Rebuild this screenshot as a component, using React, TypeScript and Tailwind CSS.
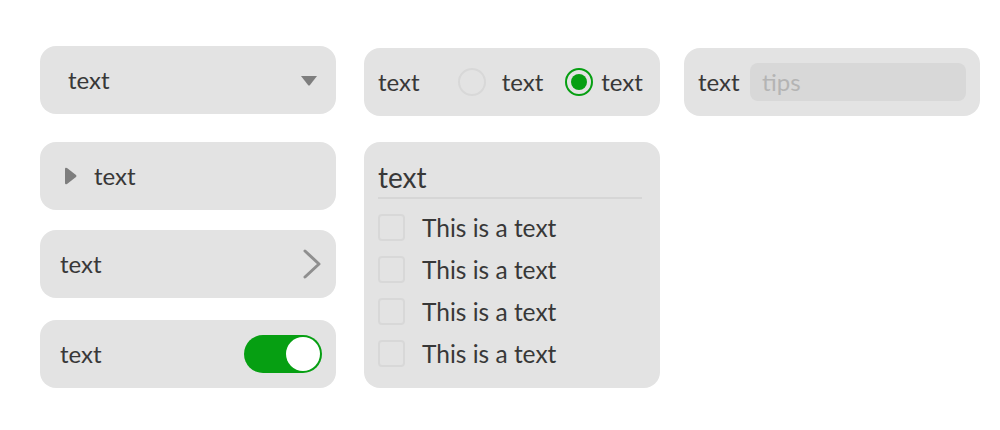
const font = { fontFamily: 'Lato, "Noto Sans", sans-serif' }

function Card({ className = '', children }: { className?: string; children: React.ReactNode }) {
  return (
    <div className={`w-[296px] rounded-2xl bg-[#e3e3e3] text-[#383838] ${className}`}>{children}</div>
  )
}

function Checkbox() {
  return <span className="h-[27px] w-[27px] shrink-0 rounded-[4px] border-2 border-[#d8d8d8]" />
}

export default function App() {
  return (
    <div className="flex h-[430px] w-[1000px] bg-white pl-10" style={font}>
      {/* left column */}
      <div className="flex flex-col pt-[46px]">
        <Card className="flex h-[68px] items-center justify-between pl-7 pr-[18px]">
          <span className="text-[24px]">text</span>
          <svg width="18" height="11" viewBox="0 0 18 11">
            <path d="M1 1 H17 L10 10 Q9 11 8 10 Z" fill="#7e7e7e" />
          </svg>
        </Card>
        <Card className="mt-7 flex h-[68px] items-center pl-6">
          <svg width="13" height="18" viewBox="0 0 13 18">
            <path d="M1 2 Q1 0 3 1 L12 8 Q13 9 12 10 L3 17 Q1 18 1 16 Z" fill="#7e7e7e" />
          </svg>
          <span className="ml-[17px] text-[24px]">text</span>
        </Card>
        <Card className="mt-5 flex h-[68px] items-center justify-between pl-5 pr-[14px]">
          <span className="text-[24px]">text</span>
          <svg width="20" height="30" viewBox="0 0 20 30">
            <polyline points="3,2 17,15 3,28" fill="none" stroke="#8f8f8f" strokeWidth="3" strokeLinecap="round" strokeLinejoin="round" />
          </svg>
        </Card>
        <Card className="mt-[22px] flex h-[68px] items-center justify-between pl-5 pr-[14px]">
          <span className="text-[24px]">text</span>
          <div className="flex h-[38px] w-[78px] items-center justify-end rounded-full bg-[#069f12] pr-[2px]">
            <span className="h-[34px] w-[34px] rounded-full bg-white" />
          </div>
        </Card>
      </div>

      {/* middle column */}
      <div className="ml-7 flex flex-col pt-12">
        <Card className="flex h-[68px] items-center pl-[14px]">
          <span className="text-[24px]">text</span>
          <span className="ml-[38px] h-[28px] w-[28px] rounded-full border-2 border-[#d8d8d8]" />
          <span className="ml-[16px] text-[24px]">text</span>
          <span className="ml-[22px] flex h-[28px] w-[28px] items-center justify-center rounded-full border-2 border-[#069f12]">
            <span className="h-[16px] w-[16px] rounded-full bg-[#069f12]" />
          </span>
          <span className="ml-[8px] text-[24px]">text</span>
        </Card>
        <Card className="mt-[26px] flex h-[246px] flex-col pl-[14px] pr-[18px] pt-[17px]">
          <div className="border-b-2 border-[#d6d6d6] pb-[2px] text-[28px] leading-[36px]">text</div>
          <div className="mt-[15px] flex flex-col gap-[15px]">
            {[0, 1, 2, 3].map((i) => (
              <div key={i} className="flex items-center">
                <Checkbox />
                <span className="ml-[17px] text-[24.5px] leading-[27px]">This is a text</span>
              </div>
            ))}
          </div>
        </Card>
      </div>

      {/* right column */}
      <div className="ml-6 flex flex-col pt-12">
        <Card className="flex h-[68px] items-center pl-[14px] pr-[14px]">
          <span className="text-[24px]">text</span>
          <div className="ml-auto flex h-[38px] w-[216px] items-center rounded-lg bg-[#d8d8d8] pl-3 text-[24px] text-[#b4b4b4]">
            tips
          </div>
        </Card>
      </div>
    </div>
  )
}
